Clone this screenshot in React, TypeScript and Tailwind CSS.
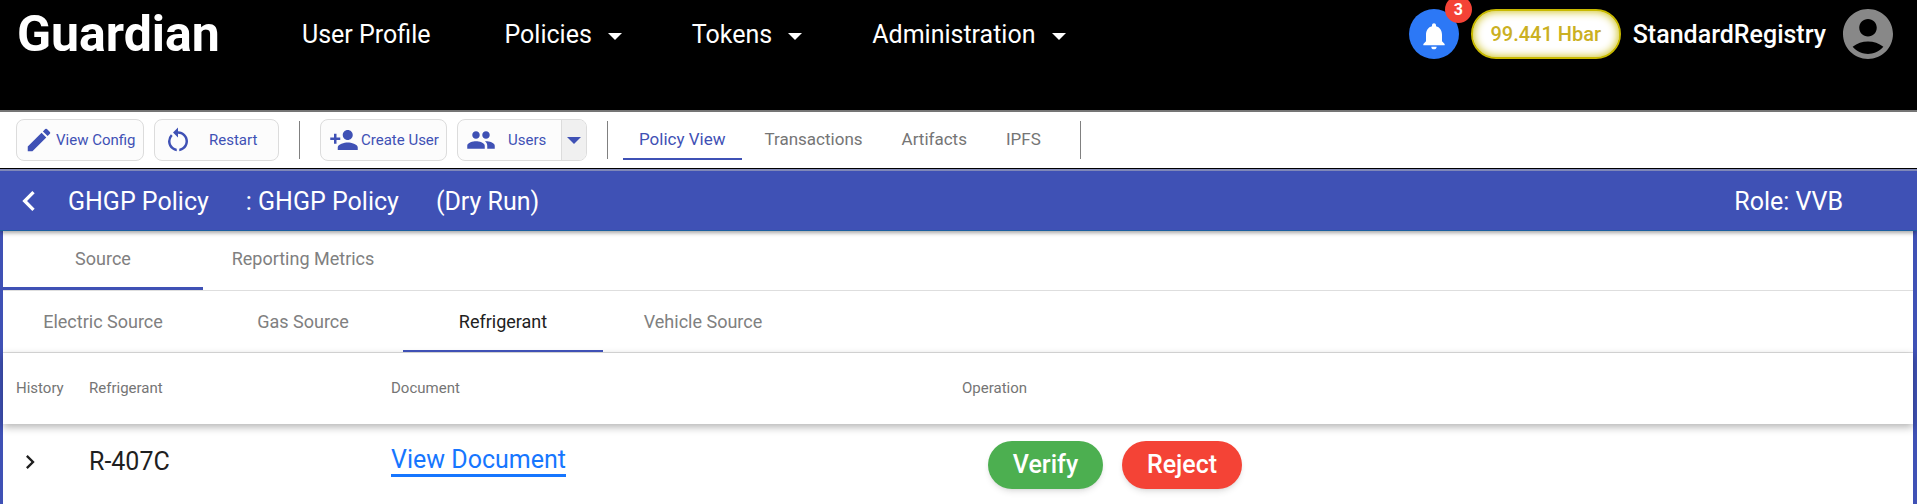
import {
  MdAccountCircle,
  MdChevronLeft,
  MdChevronRight,
  MdEdit,
  MdNotifications,
  MdPeople,
  MdPersonAdd,
  MdRestartAlt,
} from "react-icons/md";

function Caret({ className }: { className: string }) {
  return (
    <svg viewBox="0 0 14 7" className={className} fill="currentColor" aria-hidden="true">
      <path d="M0 0h14L7 7z" />
    </svg>
  );
}

function MenuButton({ label }: { label: string }) {
  return (
    <button type="button" className="flex items-center gap-4 whitespace-nowrap">
      {label}
      <Caret className="mt-0.5 h-[7px] w-[14px]" />
    </button>
  );
}

function Divider() {
  return <div className="h-[38px] w-px shrink-0 bg-[#808080]" />;
}

const toolButton =
  "flex h-[42px] items-center rounded-lg border border-[#dcdcdc] bg-[#fcfcfc] text-[15px] text-[#3f51b5] whitespace-nowrap";

const sections = ["Transactions", "Artifacts", "IPFS"];
const sourceTabs = ["Electric Source", "Gas Source", "Refrigerant", "Vehicle Source"];

function Header() {
  return (
    <header className="flex h-28 items-start border-b-2 border-[#757575] bg-black text-[25px] text-white">
      <a href="#home" className="w-[302px] shrink-0 pl-[17px] text-[50px] leading-[68px] font-bold">
        Guardian
      </a>
      <nav className="flex h-[70px] grow items-center">
        <a href="#profile" className="mr-[74px] whitespace-nowrap">User Profile</a>
        <div className="flex gap-[70px]">
          <MenuButton label="Policies" />
          <MenuButton label="Tokens" />
          <MenuButton label="Administration" />
        </div>
      </nav>
      <div className="flex h-[68px] items-center pr-[19px]">
        <button
          type="button"
          aria-label="Notifications"
          className="relative flex size-[50px] items-center justify-center rounded-full bg-[#2c78f6]"
        >
          <MdNotifications className="mt-1 size-8" />
          <span className="absolute -top-[13px] -right-[13px] flex size-[27px] items-center justify-center rounded-full bg-[#f44336] text-base leading-4 font-bold">
            3
          </span>
        </button>
        <div className="ml-3 flex h-[50px] w-[150px] items-center justify-center rounded-full border-2 border-[#c8b900] bg-white text-xl font-medium text-[#cbb022] shadow-[inset_0_0_10px_#c8b900]">
          99.441 Hbar
        </div>
        <span className="ml-3 pt-0.5 font-medium">StandardRegistry</span>
        <button type="button" aria-label="Account" className="ml-3 text-[#888888]">
          <MdAccountCircle className="size-[60px]" />
        </button>
      </div>
    </header>
  );
}

function Toolbar() {
  return (
    <div className="flex h-[57px] items-center border-b border-black pl-4">
      <button type="button" className={`${toolButton} w-32 gap-0.5 pl-[7px]`}>
        <MdEdit className="size-[30px] shrink-0" />
        View Config
      </button>
      <button type="button" className={`${toolButton} ml-2.5 w-[125px] gap-4 pl-2`}>
        <MdRestartAlt className="size-[30px] shrink-0" />
        Restart
      </button>
      <div className="px-5">
        <Divider />
      </div>
      <button type="button" className={`${toolButton} w-[127px] gap-0.5 pl-2`}>
        <MdPersonAdd className="size-[30px] shrink-0" />
        Create User
      </button>
      <div className={`${toolButton} ml-2.5 w-[130px] overflow-hidden`}>
        <button type="button" className="flex h-full grow items-center gap-3 pl-2">
          <MdPeople className="size-[30px] shrink-0" />
          Users
        </button>
        <button
          type="button"
          aria-label="Choose user"
          className="flex h-full w-[25px] items-center justify-center border-l border-[#dcdcdc] bg-[#f0f0f0]"
        >
          <Caret className="h-[7px] w-[14px]" />
        </button>
      </div>
      <div className="pr-[15px] pl-5">
        <Divider />
      </div>
      <nav className="flex h-[42px] items-center gap-[39px] text-[17px] whitespace-nowrap text-[#757575]">
        <a href="#policy" className="-mr-4 h-10 border-b-2 border-[#3f51b5] px-4 leading-[38px] text-[#3f51b5]">
          Policy View
        </a>
        {sections.map((name) => (
          <a key={name} href={`#${name}`} className="h-10 leading-[38px]">
            {name}
          </a>
        ))}
        <Divider />
      </nav>
    </div>
  );
}

function Tabs({ names, active, className }: { names: string[]; active: string; className: string }) {
  return (
    <div role="tablist" className="flex border-b border-[#dedede] text-lg text-[#808080]">
      {names.map((name) => (
        <button
          key={name}
          type="button"
          role="tab"
          aria-selected={name === active}
          className={`w-[200px] whitespace-nowrap ${className} ${
            name === active ? "border-[#3f51b5]" : "border-transparent"
          } ${name === "Refrigerant" ? "text-[#212121]" : ""}`}
        >
          {name}
        </button>
      ))}
    </div>
  );
}

function SourceTable() {
  return (
    <table className="w-full table-fixed border-separate border-spacing-0 text-left">
      <thead className="shadow-[0_3px_8px_rgba(0,0,0,0.3)]">
        <tr className="h-[71px] text-[15px] text-[#757575]">
          <th className="w-[86px] pl-[13px] font-normal">History</th>
          <th className="w-[302px] font-normal">Refrigerant</th>
          <th className="w-[571px] font-normal">Document</th>
          <th className="font-normal">Operation</th>
        </tr>
      </thead>
      <tbody>
        <tr className="h-[75px] text-[25px] text-[#1f1f1f]">
          <td className="pl-[13px]">
            <button type="button" aria-label="Show history" className="block">
              <MdChevronRight className="size-7" />
            </button>
          </td>
          <td>R-407C</td>
          <td className="pb-1">
            <a href="#document" className="border-b-3 border-[#1676ff] text-[#1676ff]">
              View Document
            </a>
          </td>
          <td>
            <div className="flex gap-[19px] pt-1.5 pl-[26px] font-medium text-white">
              <button type="button" className="h-12 w-[115px] rounded-full bg-[#4caf50] shadow-md">
                Verify
              </button>
              <button type="button" className="h-12 w-[120px] rounded-full bg-[#f44336] shadow-md">
                Reject
              </button>
            </div>
          </td>
        </tr>
      </tbody>
    </table>
  );
}

export default function App() {
  return (
    <div className="flex min-h-screen flex-col bg-white font-['Roboto',sans-serif]">
      <Header />
      <Toolbar />
      <div className="relative flex h-[62px] items-center border-t-2 border-b border-t-[#8088b8] border-b-[#1d5fa0] bg-[#3f51b5] text-[25px] whitespace-pre text-white shadow-[0_3px_4px_-1px_rgba(0,0,0,0.35)]">
        <button type="button" aria-label="Back" className="ml-[9px]">
          <MdChevronLeft className="size-10" />
        </button>
        <h1 className="ml-[19px] flex grow gap-[37px] pt-[3px]">
          <span>GHGP Policy</span>
          <span>: GHGP Policy</span>
          <span>(Dry Run)</span>
        </h1>
        <span className="mr-[74px] pt-[3px]">Role: VVB</span>
      </div>
      <main className="grow border-r-4 border-l-3 border-[#3f51b5]">
        <Tabs names={["Source", "Reporting Metrics"]} active="Source" className="h-[59px] border-b-3" />
        <Tabs names={sourceTabs} active="Refrigerant" className="h-[61px] border-b-2 pt-0.5" />
        <SourceTable />
      </main>
    </div>
  );
}
